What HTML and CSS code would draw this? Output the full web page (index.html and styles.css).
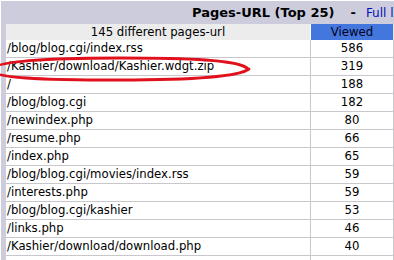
FILE: index.html
```html
<!DOCTYPE html>
<html>
<head>
<meta charset="utf-8">
<link rel="stylesheet" href="styles.css">
</head>
<body>
<div class="frame">
  <div class="title">
    <span class="title-main">Pages-URL (Top 25)</span>
    <span class="title-sep">-</span>
    <a class="title-link" href="#">Full list</a>
  </div>
  <table class="data">
    <thead>
      <tr>
        <th class="col-url">145 different pages-url</th>
        <th class="col-num viewed">Viewed</th>
        <th class="col-extra size"></th>
      </tr>
    </thead>
    <tbody>
      <tr><td class="url">/blog/blog.cgi/index.rss</td><td class="num">586</td><td class="extra"></td></tr>
      <tr><td class="url">/Kashier/download/Kashier.wdgt.zip</td><td class="num">319</td><td class="extra"></td></tr>
      <tr><td class="url">/</td><td class="num">188</td><td class="extra"></td></tr>
      <tr><td class="url">/blog/blog.cgi</td><td class="num">182</td><td class="extra"></td></tr>
      <tr><td class="url">/newindex.php</td><td class="num">80</td><td class="extra"></td></tr>
      <tr><td class="url">/resume.php</td><td class="num">66</td><td class="extra"></td></tr>
      <tr><td class="url">/index.php</td><td class="num">65</td><td class="extra"></td></tr>
      <tr><td class="url">/blog/blog.cgi/movies/index.rss</td><td class="num">59</td><td class="extra"></td></tr>
      <tr><td class="url">/interests.php</td><td class="num">59</td><td class="extra"></td></tr>
      <tr><td class="url">/blog/blog.cgi/kashier</td><td class="num">53</td><td class="extra"></td></tr>
      <tr><td class="url">/links.php</td><td class="num">46</td><td class="extra"></td></tr>
      <tr><td class="url">/Kashier/download/download.php</td><td class="num">40</td><td class="extra"></td></tr>
      <tr><td class="url">&nbsp;</td><td class="num">&nbsp;</td><td class="extra"></td></tr>
    </tbody>
  </table>
</div>
<svg class="annotation" width="394" height="260" viewBox="0 0 394 260">
  <path d="M247,68 C236,60 190,58 120,58 C50,58 -8,61 -8,70 C-8,78 40,80 120,80 C192,80 238,77 249,69" fill="none" stroke="#e0101c" stroke-width="2.8" stroke-linecap="round"/>
</svg>
</body>
</html>
```
FILE: styles.css
```css
html, body {
  margin: 0;
  padding: 0;
  background: #ffffff;
  overflow: hidden;
  width: 394px;
  height: 260px;
}

body {
  position: relative;
  font-family: "DejaVu Sans", Verdana, sans-serif;
  font-size: 11.7px;
  color: #000000;
}

.frame {
  margin: 1px 0 0 1px;
  width: 560px;
  background: #ccccdd;
  padding-left: 5px;
}

.title {
  height: 23px;
  display: flex;
  align-items: center;
  padding-left: 186px;
  white-space: nowrap;
}

.title-main {
  font-size: 13px;
  font-weight: bold;
}

.title-sep {
  font-size: 13px;
  font-weight: bold;
  margin-left: 16px;
}

.title-link {
  margin-left: 10px;
  color: #0011bb;
  text-decoration: none;
  font-size: 12px;
}

.data {
  border-collapse: collapse;
  table-layout: fixed;
  width: 555px;
}

.data th,
.data td {
  padding: 0 1px;
  text-align: center;
  font-weight: normal;
  white-space: nowrap;
  overflow: hidden;
}

.data th {
  height: 16px;
  line-height: 16px;
}

.col-url {
  width: 302px;
  background: #ececec;
  border-right: 1px solid #ffffff;
}

.col-num {
  width: 80px;
  border-right: 1px solid #e8e8e8;
}

.viewed {
  background: #4477dd;
  color: #000022;
}

.size {
  background: #2ea495;
}

.data td {
  height: 17px;
  line-height: 17px;
  background: #ffffff;
  border-bottom: 1px solid #c8c8cc;
  border-right: 1px solid #c8c8cc;
}

.data td.url {
  text-align: left;
  padding-left: 1px;
}

.annotation {
  position: absolute;
  left: 0;
  top: 0;
  pointer-events: none;
}
```
